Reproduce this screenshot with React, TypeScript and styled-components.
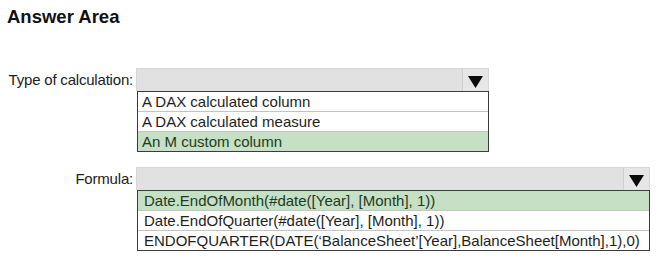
import React from "react";
import styled, { createGlobalStyle } from "styled-components";

const Global = createGlobalStyle`
  html, body { margin: 0; padding: 0; background: #ffffff; }
  body { font-family: "Liberation Sans", Arial, sans-serif; color: #1e1e1e; }
`;

const Page = styled.div`
  width: 656px;
  height: 261px;
  box-sizing: border-box;
  padding: 6px 0 0 7px;
  background: #ffffff;
`;

const Title = styled.h2`
  margin: 0;
  font-size: 18.5px;
  line-height: 22px;
  font-weight: 700;
  color: #111;
`;

const Form = styled.div`
  margin-top: 40px;
  display: grid;
  grid-template-columns: 126px auto;
  column-gap: 3px;
  row-gap: 15px;
  align-items: start;
`;

const Label = styled.div`
  height: 23px;
  display: flex;
  align-items: center;
  justify-content: flex-end;
  font-size: 15px;
  letter-spacing: -0.2px;
  color: #222;
  white-space: nowrap;
`;

const Dropdown = styled.div<{ $w: number }>`
  width: ${(p) => p.$w}px;
  display: flex;
  flex-direction: column;
`;

const Header = styled.div`
  height: 23px;
  box-sizing: border-box;
  display: flex;
  justify-content: flex-end;
  background: #e1e1e1;
  border: 1px solid #d6d6d6;
  border-bottom: none;
`;

const ArrowButton = styled.div`
  width: 26px;
  height: 100%;
  box-sizing: border-box;
  display: flex;
  align-items: center;
  justify-content: center;
  background: #e6e6e6;
  border-left: 1px solid #cfcfcf;
  padding-top: 3px;
`;

const Options = styled.div`
  margin-left: 1px;
  border: 1px solid #3c3c3c;
  display: flex;
  flex-direction: column;
`;

const Option = styled.div<{ $selected?: boolean; $inset: number }>`
  height: 19px;
  display: flex;
  align-items: center;
  padding-left: ${(p) => p.$inset}px;
  font-size: 15px;
  letter-spacing: 0;
  white-space: nowrap;
  color: ${(p) => (p.$selected ? "#1f3a1f" : "#1e1e1e")};
  background: ${(p) => (p.$selected ? "#c5e0c4" : "#ffffff")};
  & + & {
    border-top: 1px solid #c4c4c4;
  }
`;

const Arrow = () => (
  <svg width="15" height="12" viewBox="0 0 15 12">
    <polygon points="0,0 15,0 7.5,12" fill="#0a0a0a" />
  </svg>
);

type FieldProps = {
  label: string;
  width: number;
  inset: number;
  options: string[];
  selected: number;
};

const Field = ({ label, width, inset, options, selected }: FieldProps) => (
  <>
    <Label>{label}</Label>
    <Dropdown $w={width}>
      <Header>
        <ArrowButton>
          <Arrow />
        </ArrowButton>
      </Header>
      <Options>
        {options.map((o, i) => (
          <Option key={o} $selected={i === selected} $inset={inset}>
            {o}
          </Option>
        ))}
      </Options>
    </Dropdown>
  </>
);

export default function App() {
  return (
    <Page>
      <Global />
      <Title>Answer Area</Title>
      <Form>
        <Field
          label="Type of calculation:"
          width={353}
          inset={4}
          selected={2}
          options={[
            "A DAX calculated column",
            "A DAX calculated measure",
            "An M custom column",
          ]}
        />
        <Field
          label="Formula:"
          width={514}
          inset={6}
          selected={0}
          options={[
            "Date.EndOfMonth(#date([Year], [Month], 1))",
            "Date.EndOfQuarter(#date([Year], [Month], 1))",
            "ENDOFQUARTER(DATE(\u2018BalanceSheet\u2019[Year],BalanceSheet[Month],1),0)",
          ]}
        />
      </Form>
    </Page>
  );
}
